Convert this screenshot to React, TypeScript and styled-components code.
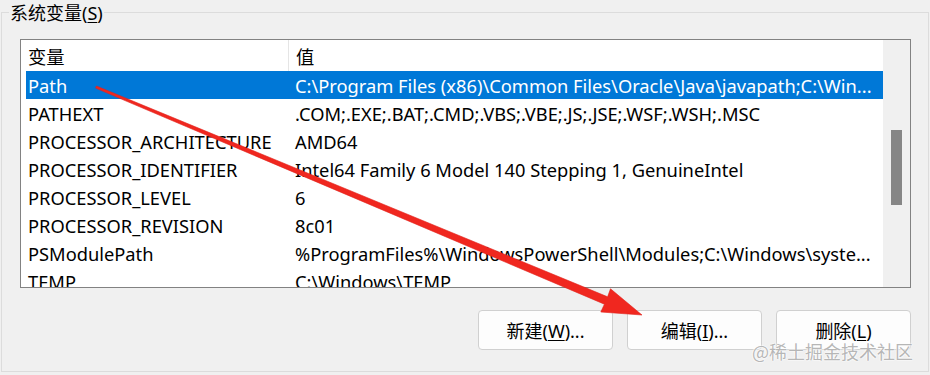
import React from "react";
import styled, { createGlobalStyle } from "styled-components";

const GlobalStyle = createGlobalStyle`
    html, body {
        margin: 0;
        padding: 0;
        background: #f0f0f0;
    }
    body {
        font-family: "Noto Sans", "Noto Sans CJK SC", sans-serif;
        font-size: 18px;
        color: #000;
    }
`;

const Frame = styled.div`
    position: relative;
    width: 930px;
    height: 375px;
    overflow: hidden;
    background: #f0f0f0;
`;

const GroupBox = styled.div`
    position: relative;
    margin: 12px 1px 1px 1px;
    height: 360px;
    border: 1px solid #dcdcdc;
    display: flex;
    flex-direction: column;
    align-items: flex-start;
    padding: 26px 0 0 18px;
    box-sizing: border-box;
`;

const GroupLabel = styled.span`
    position: absolute;
    left: 7px;
    top: -11px;
    line-height: 22px;
    padding: 0 1px;
    background: #f0f0f0;
    white-space: nowrap;
`;

const Mnemonic = styled.u`
    text-underline-offset: 2px;
`;

const ListBox = styled.div`
    width: 891px;
    height: 249px;
    border: 1px solid #828282;
    background: #fff;
    box-sizing: border-box;
    display: flex;
    overflow: hidden;
    font-size: 18.3px;
`;

const ListBody = styled.div`
    flex: 1;
    display: flex;
    flex-direction: column;
    padding-left: 5px;
    overflow: hidden;
`;

const HeaderRow = styled.div`
    display: grid;
    grid-template-columns: 262px 1fr;
    height: 31px;
    flex-shrink: 0;
`;

const HeaderCell = styled.div<{ $divider?: boolean }>`
    display: flex;
    align-items: center;
    padding-left: ${(p) => (p.$divider ? "7px" : "2px")};
    border-left: ${(p) => (p.$divider ? "1px solid #e5e5e5" : "none")};
`;

const Row = styled.div<{ $selected?: boolean }>`
    display: grid;
    grid-template-columns: 262px 1fr;
    height: 28px;
    flex-shrink: 0;
    background: ${(p) => (p.$selected ? "#0078d7" : "transparent")};
    color: ${(p) => (p.$selected ? "#fff" : "#000")};
`;

const Cell = styled.div<{ $value?: boolean }>`
    display: flex;
    align-items: center;
    padding-left: ${(p) => (p.$value ? "7px" : "2px")};
    white-space: nowrap;
    overflow: hidden;
`;

const ScrollTrack = styled.div`
    width: 27px;
    flex-shrink: 0;
    background: #f0f0f0;
    display: flex;
    justify-content: center;
    padding-top: 90px;
    box-sizing: border-box;
`;

const ScrollThumb = styled.div`
    width: 11px;
    height: 75px;
    background: #868686;
`;

const ButtonRow = styled.div`
    display: flex;
    gap: 14px;
    margin-top: 22px;
    align-self: flex-end;
    margin-right: 17px;
`;

const Button = styled.button`
    width: 135px;
    height: 40px;
    border: 1px solid #d0d0d0;
    border-radius: 4px;
    background: #fdfdfd;
    font-family: inherit;
    font-size: 18px;
    color: #000;
    padding: 0;
`;

const Overlay = styled.svg`
    position: absolute;
    left: 0;
    top: 0;
    pointer-events: none;
`;

const Watermark = styled.div`
    position: absolute;
    left: 752px;
    top: 338px;
    font-family: "Noto Sans CJK SC", sans-serif;
    font-size: 18px;
    color: rgba(150, 150, 150, 0.7);
    text-shadow: 0 0 2px #fff, 0 0 2px #fff, 0 0 1px #fff;
    white-space: nowrap;
`;

const rows: [string, string][] = [
    ["Path", "C:\\Program Files (x86)\\Common Files\\Oracle\\Java\\javapath;C:\\Win..."],
    ["PATHEXT", ".COM;.EXE;.BAT;.CMD;.VBS;.VBE;.JS;.JSE;.WSF;.WSH;.MSC"],
    ["PROCESSOR_ARCHITECTURE", "AMD64"],
    ["PROCESSOR_IDENTIFIER", "Intel64 Family 6 Model 140 Stepping 1, GenuineIntel"],
    ["PROCESSOR_LEVEL", "6"],
    ["PROCESSOR_REVISION", "8c01"],
    ["PSModulePath", "%ProgramFiles%\\WindowsPowerShell\\Modules;C:\\Windows\\syste..."],
    ["TEMP", "C:\\Windows\\TEMP"],
];

function Arrow() {
    // tapered red arrow from the Path row down to the edit button
    return (
        <Overlay width="930" height="375" viewBox="0 0 930 375">
            <polygon
                points="95.6,88.1 96.4,86.0 607.6,296.8 610.5,288.8 642,315 600.8,312 604.4,304.2"
                fill="#f0271f"
                stroke="#e0221b"
                strokeWidth="0.6"
                strokeLinejoin="round"
            />
        </Overlay>
    );
}

export default function App() {
    return (
        <Frame>
            <GlobalStyle />
            <GroupBox>
                <GroupLabel>
                    系统变量(<Mnemonic>S</Mnemonic>)
                </GroupLabel>
                <ListBox>
                    <ListBody>
                        <HeaderRow>
                            <HeaderCell>变量</HeaderCell>
                            <HeaderCell $divider>值</HeaderCell>
                        </HeaderRow>
                        {rows.map(([name, value], i) => (
                            <Row key={name} $selected={i === 0}>
                                <Cell>{name}</Cell>
                                <Cell $value>{value}</Cell>
                            </Row>
                        ))}
                    </ListBody>
                    <ScrollTrack>
                        <ScrollThumb />
                    </ScrollTrack>
                </ListBox>
                <ButtonRow>
                    <Button>
                        新建(<Mnemonic>W</Mnemonic>)...
                    </Button>
                    <Button>
                        编辑(<Mnemonic>I</Mnemonic>)...
                    </Button>
                    <Button>
                        删除(<Mnemonic>L</Mnemonic>)
                    </Button>
                </ButtonRow>
            </GroupBox>
            <Arrow />
            <Watermark>@稀土掘金技术社区</Watermark>
        </Frame>
    );
}
